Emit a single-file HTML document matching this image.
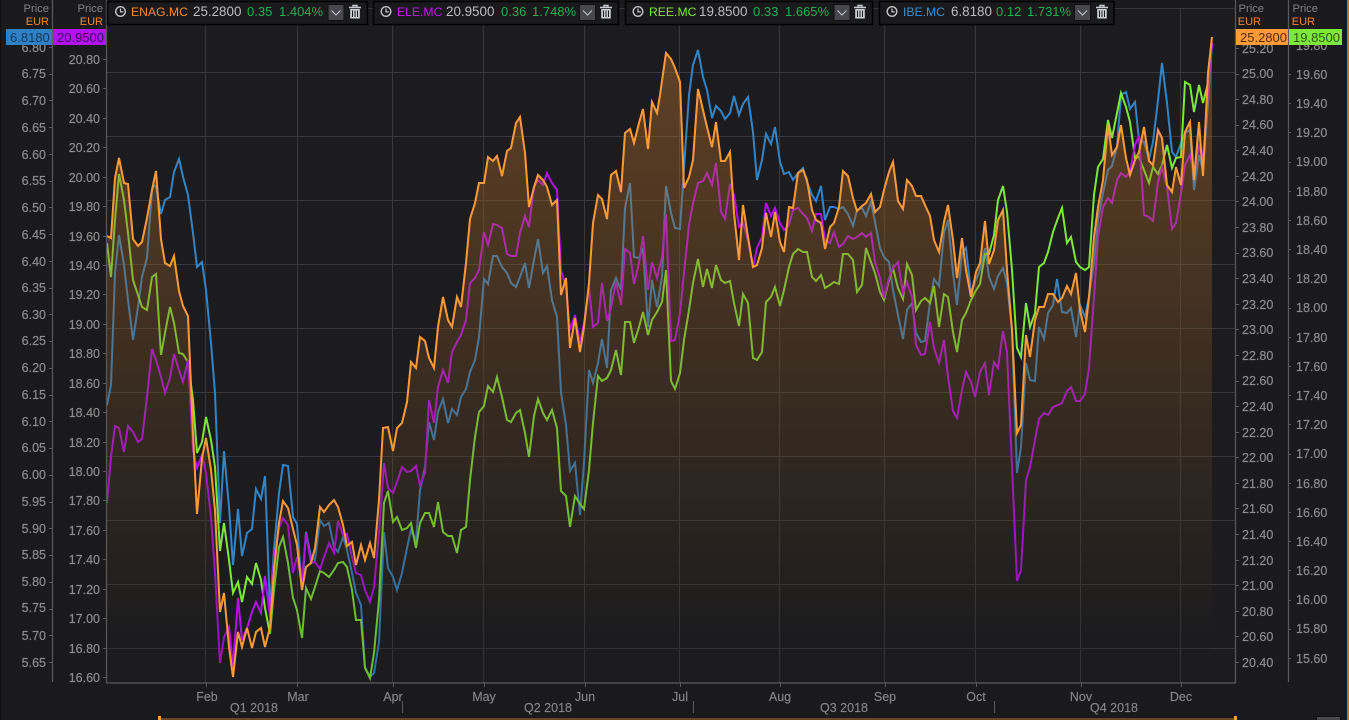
<!DOCTYPE html>
<html><head><meta charset="utf-8"><style>
html,body{margin:0;padding:0;background:#1a1a1c;width:1349px;height:720px;overflow:hidden}
svg{display:block;font-family:"Liberation Sans",Arial,sans-serif}
.a text{font-size:12.5px;fill:#8b8b8b;stroke:#8b8b8b;stroke-width:.2}
.e text{text-anchor:end}
.m text{text-anchor:middle;font-size:12.5px;fill:#858585;stroke:#858585;stroke-width:.15}
.h{font-size:11.2px;fill:#828282;text-anchor:end}
.u{font-size:11px;fill:#ff8426;text-anchor:end}
.t{font-size:13px}
.p{font-size:13.4px}
.n{font-size:12.2px}
.v{fill:#bdbdbd}.g{fill:#25ad50}
.l{fill:none;stroke-width:2;stroke-linejoin:miter}
</style></head><body>
<svg width="1349" height="720" viewBox="0 0 1349 720" xmlns="http://www.w3.org/2000/svg">
<defs><linearGradient id="f" gradientUnits="userSpaceOnUse" x1="0" y1="37" x2="0" y2="682"><stop offset="0" stop-color="#ff9632" stop-opacity=".31"/><stop offset=".93" stop-color="#ff9632" stop-opacity="0"/></linearGradient>
<g id="tr"><path d="M0 2.5H12M4 2.5V.5H8V2.5" fill="none" stroke="#c9ced4" stroke-width="1.4"/><path d="M1.2 4H10.8V13.5H1.2Z" fill="#c9ced4"/><path d="M3.5 5.5V12M6 5.5V12M8.5 5.5V12" stroke="#1a1a1c" stroke-width="1"/></g>
<g id="ck"><circle cx="0" cy="0" r="4.8" fill="none" stroke="#c4c4c4" stroke-width="1.4"/><path d="M0 -3V.4H2.8" fill="none" stroke="#c4c4c4" stroke-width="1.2"/></g>
<g id="bt"><rect x=".5" y=".5" width="16" height="16" fill="#47474d" stroke="#111"/><path d="M4 6.5L8.5 11L13 6.5" fill="none" stroke="#c4c8d0"/></g>
<polygon id="ar" points="107,682 107,236 111,238 115,178 119,158 124,183 128,184 133,239 138,246 142,242 147,218 152,190 156,171 161,239 165,263 170,266 174,256 179,291 183,306 188,316 193,433 197,514 202,458 206,438 211,470 215,510 220,612 224,593 229,647 233,677 238,632 242,647 247,628 252,648 256,632 261,628 265,647 270,627 274,570 279,523 283,501 288,508 293,529 297,545 302,590 306,567 311,563 315,548 320,507 324,512 329,505 334,500 338,507 343,525 347,546 352,542 356,565 361,545 365,560 370,543 374,558 379,500 383,428 388,427 393,451 397,428 402,423 407,402 411,362 416,368 420,337 425,341 429,358 434,368 438,327 443,297 448,320 452,327 457,297 461,307 466,263 470,219 475,203 479,183 484,183 488,157 493,161 497,156 502,176 507,151 511,148 516,123 520,117 525,153 529,207 534,187 538,175 543,180 547,187 552,205 557,200 561,295 566,278 570,348 575,318 580,352 584,327 589,283 593,223 598,195 602,199 607,219 611,175 616,171 621,192 625,133 630,129 634,143 639,123 643,109 648,149 652,102 657,113 660,95 666,53 671,59 675,68 680,82 684,188 689,177 693,160 698,89 703,110 707,127 712,147 716,122 721,161 725,161 730,152 734,213 739,260 743,205 748,237 753,267 757,265 762,248 766,213 771,237 775,212 780,242 784,252 789,207 793,208 798,173 803,170 807,180 812,210 816,220 821,223 825,249 830,227 834,223 839,207 843,171 848,176 853,198 857,211 862,206 866,203 871,194 875,212 880,207 884,190 889,172 893,162 898,201 903,209 907,180 912,186 916,196 921,196 925,205 930,216 934,240 939,252 944,222 948,205 953,240 957,278 962,238 966,270 971,297 976,272 980,263 985,221 989,264 994,250 998,220 1003,210 1007,270 1012,330 1017,433 1021,425 1026,335 1030,357 1035,320 1039,307 1044,307 1048,294 1053,294 1058,302 1062,298 1067,286 1071,294 1076,273 1080,310 1085,332 1089,297 1094,237 1098,207 1103,180 1108,125 1112,155 1117,147 1121,125 1126,158 1130,175 1135,160 1139,152 1144,127 1149,161 1153,165 1158,130 1162,138 1167,185 1172,192 1176,167 1181,185 1185,132 1190,122 1194,180 1199,122 1203,176 1208,73 1212,37 1212,682"/>
</defs>
<rect width="1349" height="720" fill="#1a1a1c"/>
<rect x="107" y="8" width="1128" height="674" fill="#1c1c1f"/>
<rect x="0" y="0" width="1.5" height="720" fill="#111"/>
<path d="M107 8.5H1235M107 72.5H1235M107 136.5H1235M107 200.5H1235M107 264.5H1235M107 328.5H1235M107 392.5H1235M107 456.5H1235M107 520.5H1235M107 584.5H1235M107 648.5H1235M205.5 8V682M297.5 8V682M392.5 8V682M483.5 8V682M584.5 8V682M679.5 8V682M779.5 8V682M884.5 8V682M975.5 8V682M1080.5 8V682M1180.5 8V682" stroke="#39393b" stroke-width="1" fill="none"/>

<polyline class="l" stroke="#3384c4" points="107,405 111,385 115,273 119,235 124,265 128,300 133,340 138,307 142,277 147,258 152,190 154,185 156,187 161,214 165,200 170,197 174,172 179,159 183,177 188,195 193,233 197,267 202,262 206,290 211,343 215,393 220,523 224,451 229,507 233,565 238,509 242,556 247,533 252,529 256,489 261,499 265,476 270,610 274,550 279,493 283,465 288,466 293,517 297,524 302,590 306,532 311,557 315,560 320,520 324,526 329,523 334,547 338,552 343,537 347,550 352,573 356,593 361,605 365,667 370,677 374,673 379,642 384,532 388,568 393,577 397,590 402,573 407,548 411,530 416,540 420,490 425,467 429,422 434,440 438,412 443,399 448,423 452,409 457,415 461,397 466,389 470,372 475,360 479,337 484,279 488,284 493,256 497,256 502,267 507,273 511,283 516,287 520,277 525,263 529,288 534,260 538,239 543,273 547,266 552,300 557,317 561,393 566,425 570,471 575,463 580,515 584,463 589,370 593,383 598,363 602,339 607,368 611,290 616,278 621,290 625,208 630,183 634,257 639,258 643,248 648,327 652,280 657,307 662,277 666,186 671,213 675,228 680,229 684,168 689,95 693,65 698,50 703,77 707,90 712,118 716,106 721,111 725,119 730,113 734,96 739,115 743,104 748,97 753,132 757,180 762,160 766,134 771,144 775,127 780,162 784,174 789,172 793,180 798,173 803,168 807,182 812,195 816,201 821,186 825,220 830,207 834,207 839,209 843,207 848,214 853,226 857,210 862,208 866,216 871,202 875,222 880,248 884,257 889,262 893,290 898,315 903,339 907,310 912,303 916,333 921,342 925,341 930,302 934,279 939,286 944,233 948,220 953,273 957,305 962,253 966,248 971,293 975,282 980,270 985,248 989,277 994,289 998,276 1003,268 1007,283 1012,330 1017,473 1021,447 1026,363 1030,380 1035,381 1039,327 1044,339 1048,313 1053,305 1057,279 1062,312 1067,313 1071,308 1076,337 1080,305 1085,317 1089,297 1094,263 1098,220 1103,193 1108,170 1112,166 1117,147 1121,95 1126,92 1130,109 1135,102 1139,140 1144,142 1149,159 1153,142 1158,100 1162,63 1167,103 1172,152 1176,157 1181,143 1185,133 1190,130 1194,190 1199,155 1203,170 1208,103 1212,43"/>

<polyline class="l" stroke="#7de83a" points="107,243 111,277 115,220 119,174 124,200 128,233 133,280 138,295 142,307 147,310 152,277 156,274 161,355 165,333 170,307 174,323 179,353 183,354 188,362 193,400 197,453 202,442 206,417 211,440 215,467 220,551 224,523 229,560 233,593 238,582 242,602 247,577 252,584 256,563 261,580 265,608 270,634 274,590 279,547 283,537 288,563 293,598 297,610 302,638 306,588 311,599 315,587 320,571 324,573 329,577 334,570 338,563 343,562 347,567 352,590 356,620 361,620 365,668 370,678 374,653 379,600 384,503 388,491 393,522 397,517 402,530 407,528 411,523 416,548 420,523 425,513 429,513 434,527 438,502 443,532 448,536 452,536 457,553 461,530 466,527 470,480 475,437 479,412 484,406 488,386 493,392 497,377 502,397 507,420 511,422 516,413 520,410 525,433 529,457 534,416 538,399 543,413 547,420 552,410 557,428 561,491 566,496 570,527 575,496 580,504 584,509 589,470 593,423 598,376 602,381 607,378 611,370 616,350 621,375 625,322 630,322 634,343 639,327 643,312 648,335 652,320 657,312 662,302 666,270 671,381 675,389 680,373 684,340 689,310 693,283 698,259 703,287 707,269 712,288 716,265 721,280 725,283 730,281 734,303 739,326 743,294 748,303 753,358 757,360 762,352 766,302 771,297 775,287 780,306 784,290 789,267 793,254 798,249 803,252 807,252 812,277 816,281 821,275 825,288 830,285 834,282 839,284 843,254 848,254 853,260 857,292 862,285 866,248 871,262 875,273 880,292 884,300 889,280 893,268 898,288 903,299 907,264 912,275 916,310 921,301 925,298 930,303 934,286 939,327 944,294 948,297 953,332 957,352 962,320 966,313 971,300 975,292 980,284 985,254 989,254 994,235 998,200 1003,186 1007,212 1012,270 1017,348 1021,357 1026,303 1030,327 1035,313 1039,267 1044,263 1048,252 1053,232 1058,218 1062,208 1067,243 1071,237 1076,262 1080,267 1085,270 1089,267 1094,195 1098,167 1103,159 1108,120 1112,138 1117,113 1121,93 1126,107 1130,122 1135,158 1139,157 1144,170 1149,183 1153,167 1158,174 1162,165 1167,145 1172,168 1176,158 1181,157 1185,82 1190,85 1194,112 1199,85 1203,103 1208,83 1212,43"/>

<polyline class="l" stroke="#b310ec" points="107,503 111,457 115,426 119,428 124,452 128,426 133,432 138,442 142,439 147,397 152,349 156,360 161,377 165,393 170,378 174,354 179,370 183,382 188,360 193,450 197,468 202,455 206,473 211,517 215,573 220,663 224,637 229,627 233,667 238,598 242,640 247,628 252,612 256,602 261,613 265,576 270,617 274,560 279,528 283,518 288,525 293,573 297,557 302,582 306,533 311,563 315,562 320,569 324,557 329,543 334,553 338,521 343,535 347,534 352,557 356,573 361,575 365,590 370,602 374,587 379,533 384,463 388,488 393,493 397,482 402,467 407,472 411,471 416,466 420,485 425,473 429,400 434,423 438,387 443,370 448,383 452,352 457,342 461,335 466,320 470,283 475,278 479,270 484,232 488,245 493,224 497,225 502,228 507,254 511,256 516,256 520,233 525,216 529,227 534,187 538,180 543,185 547,173 552,183 557,190 561,270 566,288 570,330 575,315 580,343 584,323 589,287 593,327 598,323 602,283 607,321 611,308 616,282 621,305 625,249 630,253 634,284 639,263 643,236 648,290 652,262 657,278 662,257 666,214 671,341 675,340 680,313 684,273 689,225 693,203 698,183 703,181 707,173 712,185 716,163 721,212 725,219 730,184 734,195 739,227 743,223 748,240 753,268 757,248 762,237 766,203 771,216 775,208 780,223 784,230 789,225 793,210 798,208 803,214 807,218 812,231 816,214 821,214 825,240 830,243 834,232 839,247 843,244 848,236 853,239 857,237 862,233 866,237 871,233 875,262 880,278 884,298 889,278 893,268 898,262 903,293 907,282 912,297 916,345 921,355 925,354 930,322 934,348 939,363 944,340 948,377 953,411 957,418 962,390 966,372 971,382 975,397 980,372 985,363 989,395 994,362 998,368 1003,331 1007,352 1012,467 1017,581 1021,570 1026,480 1030,467 1035,440 1039,419 1044,413 1048,415 1053,407 1058,405 1062,403 1067,391 1071,387 1076,401 1080,401 1085,394 1089,368 1094,297 1098,237 1103,207 1108,198 1112,203 1117,180 1121,173 1126,177 1130,172 1135,145 1139,136 1144,215 1149,217 1153,221 1158,182 1162,167 1167,187 1172,229 1176,223 1181,193 1185,165 1190,155 1194,173 1199,147 1203,158 1208,93 1212,43"/>

<use href="#ar" fill="#1c1c1f" fill-opacity=".2"/>
<use href="#ar" fill="url(#f)"/>

<polyline class="l" stroke="#ff9a36" points="107,236 111,238 115,178 119,158 124,183 128,184 133,239 138,246 142,242 147,218 152,190 156,171 161,239 165,263 170,266 174,256 179,291 183,306 188,316 193,433 197,514 202,458 206,438 211,470 215,510 220,612 224,593 229,647 233,677 238,632 242,647 247,628 252,648 256,632 261,628 265,647 270,627 274,570 279,523 283,501 288,508 293,529 297,545 302,590 306,567 311,563 315,548 320,507 324,512 329,505 334,500 338,507 343,525 347,546 352,542 356,565 361,545 365,560 370,543 374,558 379,500 383,428 388,427 393,451 397,428 402,423 407,402 411,362 416,368 420,337 425,341 429,358 434,368 438,327 443,297 448,320 452,327 457,297 461,307 466,263 470,219 475,203 479,183 484,183 488,157 493,161 497,156 502,176 507,151 511,148 516,123 520,117 525,153 529,207 534,187 538,175 543,180 547,187 552,205 557,200 561,295 566,278 570,348 575,318 580,352 584,327 589,283 593,223 598,195 602,199 607,219 611,175 616,171 621,192 625,133 630,129 634,143 639,123 643,109 648,149 652,102 657,113 660,95 666,53 671,59 675,68 680,82 684,188 689,177 693,160 698,89 703,110 707,127 712,147 716,122 721,161 725,161 730,152 734,213 739,260 743,205 748,237 753,267 757,265 762,248 766,213 771,237 775,212 780,242 784,252 789,207 793,208 798,173 803,170 807,180 812,210 816,220 821,223 825,249 830,227 834,223 839,207 843,171 848,176 853,198 857,211 862,206 866,203 871,194 875,212 880,207 884,190 889,172 893,162 898,201 903,209 907,180 912,186 916,196 921,196 925,205 930,216 934,240 939,252 944,222 948,205 953,240 957,278 962,238 966,270 971,297 976,272 980,263 985,221 989,264 994,250 998,220 1003,210 1007,270 1012,330 1017,433 1021,425 1026,335 1030,357 1035,320 1039,307 1044,307 1048,294 1053,294 1058,302 1062,298 1067,286 1071,294 1076,273 1080,310 1085,332 1089,297 1094,237 1098,207 1103,180 1108,125 1112,155 1117,147 1121,125 1126,158 1130,175 1135,160 1139,152 1144,127 1149,161 1153,165 1158,130 1162,138 1167,185 1172,192 1176,167 1181,185 1185,132 1190,122 1194,180 1199,122 1203,176 1208,73 1212,37"/>

<!-- axes -->
<path d="M52.5 0V682M106.5 0V683H1235.5V0M1288.5 0V682" fill="none" stroke="#5a5a5c" stroke-width="1.2"/>
<path d="M49 47.5h3M49 74.5h3M49 100.5h3M49 127.5h3M49 154.5h3M49 181.5h3M49 207.5h3M49 234.5h3M49 261.5h3M49 288.5h3M49 314.5h3M49 341.5h3M49 368.5h3M49 395.5h3M49 421.5h3M49 448.5h3M49 475.5h3M49 502.5h3M49 528.5h3M49 555.5h3M49 582.5h3M49 609.5h3M49 635.5h3M49 662.5h3
M103 59.5h3M103 88.5h3M103 118.5h3M103 147.5h3M103 177.5h3M103 206.5h3M103 236.5h3M103 265.5h3M103 294.5h3M103 324.5h3M103 353.5h3M103 383.5h3M103 412.5h3M103 442.5h3M103 471.5h3M103 500.5h3M103 530.5h3M103 559.5h3M103 589.5h3M103 618.5h3M103 648.5h3M103 677.5h3
M1235 48.5h4M1235 74.5h4M1235 99.5h4M1235 125.5h4M1235 150.5h4M1235 176.5h4M1235 201.5h4M1235 227.5h4M1235 253.5h4M1235 278.5h4M1235 304.5h4M1235 329.5h4M1235 355.5h4M1235 381.5h4M1235 406.5h4M1235 432.5h4M1235 457.5h4M1235 483.5h4M1235 508.5h4M1235 534.5h4M1235 560.5h4M1235 585.5h4M1235 611.5h4M1235 636.5h4M1235 662.5h4
M1288 74.5h3M1288 103.5h3M1288 132.5h3M1288 162.5h3M1288 191.5h3M1288 220.5h3M1288 249.5h3M1288 278.5h3M1288 308.5h3M1288 337.5h3M1288 366.5h3M1288 395.5h3M1288 424.5h3M1288 454.5h3M1288 483.5h3M1288 512.5h3M1288 541.5h3M1288 570.5h3M1288 600.5h3M1288 629.5h3M1288 658.5h3
M206.5 682v5M297.5 682v5M393.5 682v5M484.5 682v5M585.5 682v5M680.5 682v5M780.5 682v5M885.5 682v5M976.5 682v5M1081.5 682v5M1181.5 682v5
M402.5 701v12M693.5 701v12M994.5 701v12" fill="none" stroke="#5a5a5c" stroke-width="1"/>

<g class="a e">
<text x="46" y="52">6.80</text><text x="46" y="78">6.75</text><text x="46" y="105">6.70</text><text x="46" y="132">6.65</text><text x="46" y="159">6.60</text><text x="46" y="185">6.55</text><text x="46" y="212">6.50</text><text x="46" y="239">6.45</text><text x="46" y="266">6.40</text><text x="46" y="292">6.35</text><text x="46" y="319">6.30</text><text x="46" y="345">6.25</text><text x="46" y="372">6.20</text><text x="46" y="399">6.15</text><text x="46" y="426">6.10</text><text x="46" y="452">6.05</text><text x="46" y="479">6.00</text><text x="46" y="506">5.95</text><text x="46" y="533">5.90</text><text x="46" y="559">5.85</text><text x="46" y="586">5.80</text><text x="46" y="612">5.75</text><text x="46" y="640">5.70</text><text x="46" y="667">5.65</text>
<text x="100" y="64">20.80</text><text x="100" y="93">20.60</text><text x="100" y="123">20.40</text><text x="100" y="152">20.20</text><text x="100" y="182">20.00</text><text x="100" y="211">19.80</text><text x="100" y="241">19.60</text><text x="100" y="270">19.40</text><text x="100" y="299">19.20</text><text x="100" y="329">19.00</text><text x="100" y="358">18.80</text><text x="100" y="388">18.60</text><text x="100" y="417">18.40</text><text x="100" y="447">18.20</text><text x="100" y="476">18.00</text><text x="100" y="505">17.80</text><text x="100" y="535">17.60</text><text x="100" y="564">17.40</text><text x="100" y="594">17.20</text><text x="100" y="623">17.00</text><text x="100" y="653">16.80</text><text x="100" y="682">16.60</text>
</g>
<g class="a">
<text x="1242" y="53">25.20</text><text x="1242" y="78">25.00</text><text x="1242" y="104">24.80</text><text x="1242" y="129">24.60</text><text x="1242" y="155">24.40</text><text x="1242" y="181">24.20</text><text x="1242" y="206">24.00</text><text x="1242" y="232">23.80</text><text x="1242" y="257">23.60</text><text x="1242" y="283">23.40</text><text x="1242" y="309">23.20</text><text x="1242" y="334">23.00</text><text x="1242" y="360">22.80</text><text x="1242" y="385">22.60</text><text x="1242" y="411">22.40</text><text x="1242" y="437">22.20</text><text x="1242" y="462">22.00</text><text x="1242" y="488">21.80</text><text x="1242" y="513">21.60</text><text x="1242" y="539">21.40</text><text x="1242" y="565">21.20</text><text x="1242" y="590">21.00</text><text x="1242" y="616">20.80</text><text x="1242" y="641">20.60</text><text x="1242" y="667">20.40</text>
<text x="1296" y="50">19.80</text><text x="1296" y="79">19.60</text><text x="1296" y="108">19.40</text><text x="1296" y="137">19.20</text><text x="1296" y="166">19.00</text><text x="1296" y="196">18.80</text><text x="1296" y="225">18.60</text><text x="1296" y="254">18.40</text><text x="1296" y="283">18.20</text><text x="1296" y="312">18.00</text><text x="1296" y="342">17.80</text><text x="1296" y="371">17.60</text><text x="1296" y="400">17.40</text><text x="1296" y="429">17.20</text><text x="1296" y="458">17.00</text><text x="1296" y="488">16.80</text><text x="1296" y="517">16.60</text><text x="1296" y="546">16.40</text><text x="1296" y="575">16.20</text><text x="1296" y="604">16.00</text><text x="1296" y="633">15.80</text><text x="1296" y="663">15.60</text>
</g>

<g class="m">
<text x="207" y="701">Feb</text><text x="298" y="701">Mar</text><text x="393" y="701">Apr</text><text x="484" y="701">May</text><text x="585" y="701">Jun</text><text x="680" y="701">Jul</text><text x="780" y="701">Aug</text><text x="885" y="701">Sep</text><text x="976" y="701">Oct</text><text x="1081" y="701">Nov</text><text x="1181" y="701">Dec</text>
<text x="254" y="712">Q1 2018</text><text x="548" y="712">Q2 2018</text><text x="844" y="712">Q3 2018</text><text x="1114" y="712">Q4 2018</text>
</g>

<!-- headers -->
<text class="h" x="49" y="12">Price</text><text class="u" x="49" y="25">EUR</text>
<text class="h" x="103" y="12">Price</text><text class="u" x="103" y="25">EUR</text>
<text class="h" x="1264" y="12">Price</text><text class="u" x="1261" y="25">EUR</text>
<text class="h" x="1318" y="12">Price</text><text class="u" x="1315" y="25">EUR</text>

<!-- tags -->
<rect x="6" y="29" width="46" height="16" fill="#2f80c4"/><text class="t" x="10" y="42" fill="#143a5c">6.8180</text>
<rect x="53" y="29" width="53" height="16" fill="#b313ee"/><text class="t" x="57" y="42" fill="#3f0a58">20.9500</text>
<rect x="1236" y="29" width="52" height="16" fill="#ff9a36"/><text class="t" x="1240" y="42" fill="#4a3010">25.2800</text>
<rect x="1289" y="29" width="53" height="16" fill="#7de83a"/><text class="t" x="1293" y="42" fill="#2c5a14">19.8500</text>

<!-- tab 1 -->
<rect x="107.5" y="1.5" width="260" height="23" fill="#1a1a1c" stroke="#000" stroke-width="1.5"/>
<use href="#ck" x="120.5" y="11.5"/>
<text class="n" x="131" y="16" fill="#ff8a30">ENAG.MC</text><text class="p v" x="193" y="16">25.2800</text><text class="t g" x="247" y="16">0.35</text><text class="t g" x="279" y="16">1.404%</text>
<use href="#bt" x="327.5" y="4"/><use href="#tr" x="349" y="5"/>
<!-- tab 2 -->
<rect x="373.5" y="1.5" width="245" height="23" fill="#1a1a1c" stroke="#000" stroke-width="1.5"/>
<use href="#ck" x="386" y="11.5"/>
<text class="n" x="397" y="16" fill="#bf1cf0">ELE.MC</text><text class="p v" x="446" y="16">20.9500</text><text class="t g" x="501" y="16">0.36</text><text class="t g" x="532" y="16">1.748%</text>
<use href="#bt" x="579" y="4"/><use href="#tr" x="600" y="5"/>
<!-- tab 3 -->
<rect x="625.5" y="1.5" width="247" height="23" fill="#1a1a1c" stroke="#000" stroke-width="1.5"/>
<use href="#ck" x="638" y="11.5"/>
<text class="n" x="649" y="16" fill="#7de83a">REE.MC</text><text class="p v" x="699" y="16">19.8500</text><text class="t g" x="753" y="16">0.33</text><text class="t g" x="785" y="16">1.665%</text>
<use href="#bt" x="833.5" y="4"/><use href="#tr" x="854" y="5"/>
<!-- tab 4 -->
<rect x="879.5" y="1.5" width="234.5" height="23" fill="#1a1a1c" stroke="#000" stroke-width="1.5"/>
<use href="#ck" x="892" y="11.5"/>
<text class="n" x="903" y="16" fill="#3b8fd0">IBE.MC</text><text class="p v" x="951" y="16">6.8180</text><text class="t g" x="996" y="16">0.12</text><text class="t g" x="1027" y="16">1.731%</text>
<use href="#bt" x="1074" y="4"/><use href="#tr" x="1096" y="5"/>

<!-- scroller -->
<rect x="159" y="718" width="1076" height="2" fill="#6a4722"/>
<rect x="158" y="716" width="3" height="4" fill="#ff9a36"/><rect x="1234" y="716" width="3" height="4" fill="#ff9a36"/>
<rect x="1316.5" y="716.5" width="24" height="4" fill="#47474d" stroke="#111"/>
<rect x="1347" y="0" width="2" height="720" fill="#c07428"/>
</svg>
</body></html>
